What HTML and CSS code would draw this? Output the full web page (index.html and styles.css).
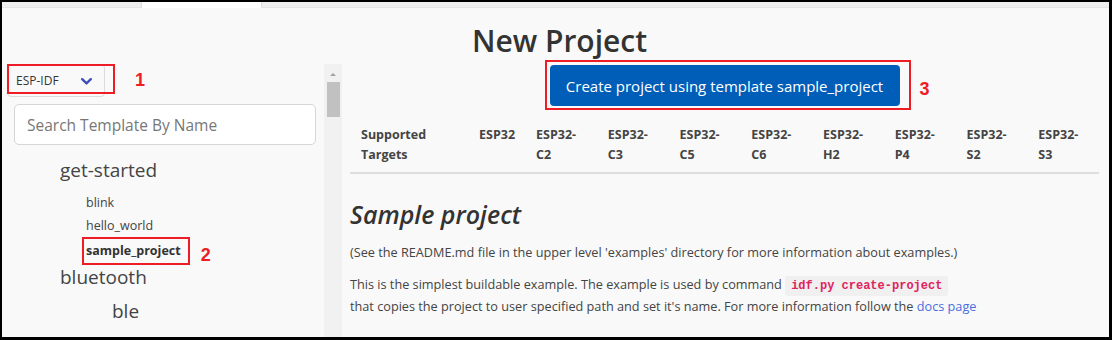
FILE: index.html
```html
<!DOCTYPE html>
<html lang="en">

<head>
    <meta charset="UTF-8">
    <title>New Project</title>
    <link rel="stylesheet" href="styles.css">
</head>

<body>
    <div class="tabs">
        <span class="tab"></span>
        <span class="tab active"></span>
        <span class="tab rest"></span>
    </div>

    <h1 class="title">New Project</h1>

    <div class="main">
        <aside class="sidebar">
            <div class="sidebar-body">
                <div class="select-row">
                    <div class="select">
                        <span>ESP-IDF</span>
                        <svg class="chevron" width="11" height="7" viewBox="0 0 11 7">
                            <path d="M1.2 1.2 L5.5 5.4 L9.8 1.2" fill="none" stroke="#3f51b5" stroke-width="2.4" stroke-linecap="round" stroke-linejoin="round" />
                        </svg>
                        <span class="mark-box select-mark"></span>
                    </div>
                    <span class="mark">1</span>
                </div>

                <input class="search" type="text" placeholder="Search Template By Name">

                <ul class="tree">
                    <li class="group">get-started</li>
                    <li class="item">blink</li>
                    <li class="item">hello_world</li>
                    <li class="item selected">
                        <span class="picked">sample_project</span>
                        <span class="mark">2</span>
                    </li>
                    <li class="group">bluetooth</li>
                    <li class="group sub">ble</li>
                </ul>
            </div>
            <div class="scrollbar">
                <span class="arrow"></span>
                <span class="thumb"></span>
            </div>
        </aside>

        <section class="content">
            <div class="actions">
                <div class="btn-box">
                    <button class="btn" type="button">Create project using template sample_project</button>
                    <span class="mark btn-mark">3</span>
                </div>
            </div>

            <div class="targets">
                <div class="cell">Supported<br>Targets</div>
                <div class="cell">ESP32</div>
                <div class="cell">ESP32-<br>C2</div>
                <div class="cell">ESP32-<br>C3</div>
                <div class="cell">ESP32-<br>C5</div>
                <div class="cell">ESP32-<br>C6</div>
                <div class="cell">ESP32-<br>H2</div>
                <div class="cell">ESP32-<br>P4</div>
                <div class="cell">ESP32-<br>S2</div>
                <div class="cell">ESP32-<br>S3</div>
            </div>

            <h2 class="readme-title">Sample project</h2>
            <p>(See the README.md file in the upper level 'examples' directory for more information about examples.)</p>
            <p>
                This is the simplest buildable example. The example is used by command <code>idf.py create-project</code><br>
                that copies the project to user specified path and set it's name. For more information follow the <a href="#">docs page</a>
            </p>
        </section>
    </div>
</body>

</html>
```

FILE: styles.css
```css
html {
    background: #000;
}

body {
    margin: 0;
    width: 1112px;
    height: 340px;
    box-sizing: border-box;
    border: solid #000;
    border-width: 2px 3px 3px 2px;
    overflow: hidden;
    background: #f9f9f9;
    font-family: 'Open Sans', 'Noto Sans', sans-serif;
    color: #444;
}

/* top tab strip */
.tabs {
    display: flex;
    height: 6px;
}

.tab {
    width: 139px;
    background: #efefef;
    border-right: 1px solid #dedede;
    border-bottom: 1px solid #e6e6e6;
}

.tab.active {
    width: 119px;
    background: #fff;
    border-bottom-color: #fff;
}

.tab.rest {
    flex: 1;
    border-right: none;
}

.title {
    margin: 17px 0 0;
    padding-left: 8px;
    height: 35px;
    text-align: center;
    font-size: 30px;
    line-height: 32px;
    font-weight: 600;
    color: #333;
}

.main {
    display: flex;
    height: 277px;
}

/* left column */
.sidebar {
    width: 340px;
    margin-top: 4px;
    display: flex;
}

.sidebar-body {
    flex: 1;
}

.select-row {
    display: flex;
    align-items: flex-start;
    padding-left: 5px;
}

.select {
    position: relative;
    box-sizing: border-box;
    width: 98px;
    height: 33px;
    border: 1px solid #dcdcdc;
    border-radius: 4px;
    padding: 0 12px 0 8px;
    display: flex;
    align-items: center;
    justify-content: space-between;
    font-size: 12px;
    color: #333;
}

.chevron {
    margin-top: 1px;
}

.mark-box {
    position: absolute;
    border: 2px solid #ee1c25;
    box-sizing: border-box;
}

.select-mark {
    left: -1px;
    top: -1px;
    width: 108px;
    height: 30px;
}

.mark {
    color: #ee1c25;
    font-weight: bold;
    font-size: 18px;
    line-height: 20px;
    font-family: 'Liberation Sans', Arial, sans-serif;
}

.select-row .mark {
    margin: 6px 0 0 30px;
}

.search {
    display: block;
    box-sizing: border-box;
    width: 302px;
    height: 41px;
    margin: 7px 0 0 12px;
    padding: 0 12px;
    border: 1px solid #d6d6d6;
    border-radius: 5px;
    background: #fff;
    font-family: inherit;
    font-size: 15.5px;
}

.search::placeholder {
    color: #777;
}

.tree {
    list-style: none;
    margin: 13px 0 0;
    padding: 0;
}

.group {
    padding-left: 58px;
    font-size: 19px;
    line-height: 24px;
    color: #444;
}

.group.sub {
    padding-left: 110px;
    margin-top: 10px;
}

.item {
    padding-left: 84px;
    font-size: 12.5px;
    line-height: 23px;
    color: #444;
}

.group + .item {
    margin-top: 9px;
}

.item.selected {
    display: flex;
    align-items: center;
    padding-left: 80px;
    line-height: 22px;
}

.picked {
    border: 2px solid #ee1c25;
    padding: 1px 7px 1px 2px;
    font-weight: bold;
    color: #333;
}

.item .mark {
    margin: 8px 0 0 11px;
}

.scrollbar {
    width: 18px;
    background: #f1f1f1;
    display: flex;
    flex-direction: column;
    align-items: center;
}

.arrow {
    margin-top: 9px;
    border: 3px solid transparent;
    border-top: none;
    border-bottom: 3px solid #a3a3a3;
}

.thumb {
    margin-top: 6px;
    width: 13px;
    height: 35px;
    background: #c1c1c1;
}

/* right column */
.content {
    flex: 1;
    padding: 0 10px 0 8px;
}

.actions {
    display: flex;
    justify-content: center;
    padding-left: 6px;
}

.btn-box {
    position: relative;
    border: 2px solid #ee1c25;
    padding: 3px 9px 2px 3px;
}

.btn-mark {
    position: absolute;
    left: calc(100% + 11px);
    top: 17px;
}

.btn {
    display: block;
    width: 350px;
    height: 41px;
    border: none;
    border-radius: 4px;
    background: #005eb8;
    color: #fff;
    font-family: inherit;
    font-size: 15px;
    cursor: pointer;
}

.targets {
    display: grid;
    grid-template-columns: 118px 57px repeat(8, 1fr);
    margin-top: 12px;
    border-bottom: 2px solid #dedede;
}

.cell {
    padding: 3px 0 7px 11px;
    font-size: 12.5px;
    line-height: 20px;
    font-weight: bold;
    color: #444;
}

.readme-title {
    margin: 25px 0 0;
    font-size: 25px;
    line-height: 30px;
    font-style: italic;
    font-weight: 600;
    color: #333;
}

p {
    margin: 13px 0 0;
    font-size: 12.7px;
    line-height: 20px;
}

p + p {
    margin-top: 12px;
}

code {
    display: inline-block;
    padding: 0 6px;
    line-height: 20px;
    background: #f0f0f0;
    border-radius: 3px;
    color: #e0245e;
    font-family: 'Liberation Mono', 'Courier New', monospace;
    font-size: 12px;
    font-weight: bold;
}

a {
    color: #4a6ee0;
    text-decoration: none;
}
```
